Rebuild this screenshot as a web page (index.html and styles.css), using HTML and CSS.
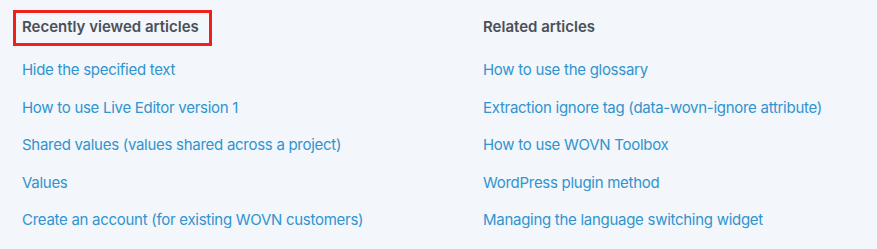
FILE: index.html
```html
<!DOCTYPE html>
<html lang="en">
<head>
    <meta charset="UTF-8">
    <title>Articles</title>
    <link rel="stylesheet" href="styles.css">
</head>
<body>

<div class="articles">
    <!-- Recently viewed -->
    <section class="article-list">
        <h2 class="list-title highlighted">Recently viewed articles</h2>
        <ul>
            <li><a href="#">Hide the specified text</a></li>
            <li><a href="#">How to use Live Editor version 1</a></li>
            <li><a href="#">Shared values (values shared across a project)</a></li>
            <li><a href="#">Values</a></li>
            <li><a href="#">Create an account (for existing WOVN customers)</a></li>
        </ul>
    </section>

    <!-- Related -->
    <section class="article-list">
        <h2 class="list-title">Related articles</h2>
        <ul>
            <li><a href="#">How to use the glossary</a></li>
            <li><a href="#">Extraction ignore tag (data-wovn-ignore attribute)</a></li>
            <li><a href="#">How to use WOVN Toolbox</a></li>
            <li><a href="#">WordPress plugin method</a></li>
            <li><a href="#">Managing the language switching widget</a></li>
        </ul>
    </section>
</div>

</body>
</html>
```

FILE: styles.css
```css
body {
    margin: 0;
    background-color: #f3f6fa;
    font-family: Inter, "Noto Sans", sans-serif;
    font-size: 15px;
}
.articles {
    display: grid;
    grid-template-columns: 461px 1fr;
    padding: 10px 0 0 13px;
}
.list-title {
    display: inline-block;
    margin: 0;
    padding: 4px 10px 6px 6px;
    border: 3px solid transparent;
    font-size: 15px;
    line-height: 20px;
    font-weight: 600;
    color: #4a5058;
}
.list-title.highlighted {
    border-color: #f0201a;
}
ul {
    list-style: none;
    margin: 0;
    padding: 14px 0 0 9px;
}
li {
    line-height: 20px;
    margin-bottom: 17.5px;
    letter-spacing: -0.28px;
}
a {
    color: #2f94d0;
    text-decoration: none;
}
```
